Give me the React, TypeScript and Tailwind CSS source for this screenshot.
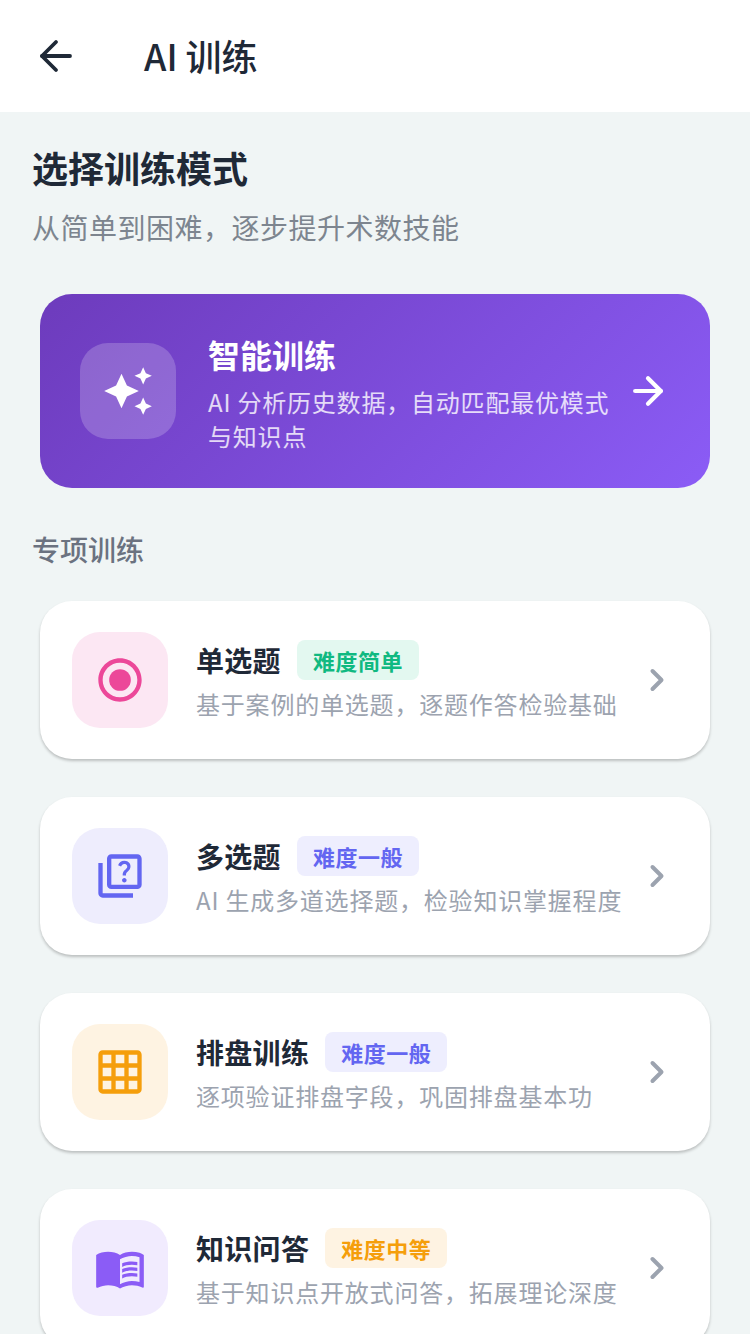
import { ArrowLeft, ArrowRight, ChevronRight } from "lucide-react";
import type { ReactNode } from "react";

const FONT = { fontFamily: '"Noto Sans CJK SC", "Noto Sans", sans-serif' };

const RadioIcon = () => (
  <svg viewBox="0 0 24 24" className="w-[52px] h-[52px]" fill="#ec4899">
    <path d="M12 2C6.48 2 2 6.48 2 12s4.48 10 10 10 10-4.48 10-10S17.52 2 12 2zm0 18c-4.42 0-8-3.58-8-8s3.58-8 8-8 8 3.58 8 8-3.58 8-8 8z" />
    <circle cx="12" cy="12" r="5" />
  </svg>
);

const QuizIcon = () => (
  <svg viewBox="0 0 24 24" className="w-[52px] h-[52px]" fill="#6366f1">
    <path d="M4 6H2v14c0 1.1.9 2 2 2h14v-2H4V6zm16-4H8c-1.1 0-2 .9-2 2v12c0 1.1.9 2 2 2h12c1.1 0 2-.9 2-2V4c0-1.1-.9-2-2-2zm0 14H8V4h12v12zm-6.49-5.84c.41-.73 1.18-1.16 1.63-1.8.48-.68.21-1.94-1.14-1.94-.88 0-1.32.67-1.5 1.23l-1.37-.57C11.51 5.96 12.52 5 13.99 5c1.23 0 2.08.56 2.51 1.26.37.6.58 1.73.01 2.57-.63.93-1.23 1.21-1.56 1.81-.13.24-.18.4-.18 1.18h-1.52c.01-.41-.06-1.08.26-1.66zm-.56 3.79c0-.59.47-1.04 1.05-1.04.59 0 1.04.45 1.04 1.04 0 .58-.44 1.05-1.04 1.05-.58 0-1.05-.47-1.05-1.05z" />
  </svg>
);

const GridIcon = () => (
  <svg viewBox="0 0 24 24" className="w-[52px] h-[52px]" fill="#f59e0b">
    <path d="M20 2H4c-1.1 0-2 .9-2 2v16c0 1.1.9 2 2 2h16c1.1 0 2-.9 2-2V4c0-1.1-.9-2-2-2zM8 20H4v-4h4v4zm0-6H4v-4h4v4zm0-6H4V4h4v4zm6 12h-4v-4h4v4zm0-6h-4v-4h4v4zm0-6h-4V4h4v4zm6 12h-4v-4h4v4zm0-6h-4v-4h4v4zm0-6h-4V4h4v4z" />
  </svg>
);

const BookIcon = () => (
  <svg viewBox="0 0 24 24" className="w-[52px] h-[52px]" fill="#8b5cf6">
    <path d="M21 5c-1.11-.35-2.33-.5-3.5-.5-1.95 0-4.05.4-5.5 1.5-1.45-1.1-3.55-1.5-5.5-1.5S2.45 4.9 1 6v14.65c0 .25.25.5.5.5.1 0 .15-.05.25-.05C3.1 20.45 5.05 20 6.5 20c1.95 0 4.05.4 5.5 1.5 1.35-.85 3.8-1.5 5.5-1.5 1.65 0 3.35.3 4.75 1.05.1.05.15.05.25.05.25 0 .5-.25.5-.5V6c-.6-.45-1.25-.75-2-1zm0 13.5c-1.1-.35-2.3-.5-3.5-.5-1.7 0-4.15.65-5.5 1.5V8c1.35-.85 3.8-1.5 5.5-1.5 1.2 0 2.4.15 3.5.5v11.5z" />
    <path d="M17.5 10.5c.88 0 1.73.09 2.5.26V9.24c-.79-.15-1.64-.24-2.5-.24-1.7 0-3.24.29-4.5.83v1.66c1.13-.64 2.7-.99 4.5-.99zM13 12.49v1.66c1.13-.64 2.7-.99 4.5-.99.88 0 1.73.09 2.5.26V11.9c-.79-.15-1.64-.24-2.5-.24-1.7 0-3.24.3-4.5.83zM17.5 14.33c-1.7 0-3.24.29-4.5.83v1.66c1.13-.64 2.7-.99 4.5-.99.88 0 1.73.09 2.5.26v-1.52c-.79-.16-1.64-.24-2.5-.24z" />
  </svg>
);

const SparkleIcon = () => (
  <svg viewBox="0 0 24 24" className="w-[52px] h-[52px]" fill="#ffffff">
    <path d="M19 9l1.25-2.75L23 5l-2.75-1.25L19 1l-1.25 2.75L15 5l2.75 1.25L19 9zm-7.5.5L9 4 6.5 9.5 1 12l5.5 2.5L9 20l2.5-5.5L17 12l-5.5-2.5zM19 15l-1.25 2.75L15 19l2.75 1.25L19 23l1.25-2.75L23 19l-2.75-1.25L19 15z" />
  </svg>
);

interface Mode {
  title: string;
  desc: string;
  level: string;
  levelClass: string;
  iconBg: string;
  icon: ReactNode;
}

const modes: Mode[] = [
  { title: "单选题", desc: "基于案例的单选题，逐题作答检验基础", level: "难度简单", levelClass: "bg-[#e3f8f0] text-[#10b981]", iconBg: "bg-[#fce7f3]", icon: <RadioIcon /> },
  { title: "多选题", desc: "AI 生成多道选择题，检验知识掌握程度", level: "难度一般", levelClass: "bg-[#eeeefe] text-[#6366f1]", iconBg: "bg-[#eeedfd]", icon: <QuizIcon /> },
  { title: "排盘训练", desc: "逐项验证排盘字段，巩固排盘基本功", level: "难度一般", levelClass: "bg-[#eeeefe] text-[#6366f1]", iconBg: "bg-[#fef3e2]", icon: <GridIcon /> },
  { title: "知识问答", desc: "基于知识点开放式问答，拓展理论深度", level: "难度中等", levelClass: "bg-[#fef3e2] text-[#f59e0b]", iconBg: "bg-[#f1ebfe]", icon: <BookIcon /> },
];

export default function App() {
  return (
    <div className="h-[1334px] overflow-hidden bg-[#f0f5f5]" style={FONT}>
      {/* Header */}
      <header className="h-[112px] bg-white flex items-center pl-[32px]">
        <ArrowLeft className="w-[48px] h-[48px] text-[#1f2937]" strokeWidth={1.9} />
        <h1 className="ml-[64px] mb-[3px] text-[36px] leading-[44px] font-medium text-[#1f2937]">AI 训练</h1>
      </header>

      <div className="pt-[30px]">
        <div className="px-[32px]">
          <h2 className="text-[36px] leading-[50px] font-bold text-[#1f2937]">选择训练模式</h2>
          <p className="mt-[15px] text-[28px] leading-[40px] tracking-[0.5px] text-[#7d858f]">从简单到困难，逐步提升术数技能</p>
        </div>

        {/* Smart training */}
        <div className="mx-[40px] mt-[47px] h-[194px] rounded-[32px] bg-[linear-gradient(135deg,#6d3bbc,#8b5cf6)] flex items-center pl-[40px] pr-[40px]">
          <div className="w-[96px] h-[96px] shrink-0 rounded-[28px] bg-white/20 flex items-center justify-center">
            <SparkleIcon />
          </div>
          <div className="ml-[32px] mt-[3px] flex-1">
            <div className="text-[32px] leading-[44px] font-bold text-white">智能训练</div>
            <p className="mt-[9px] w-[410px] text-[24px] leading-[34px] tracking-[0.8px] text-white/80">AI 分析历史数据，自动匹配最优模式与知识点</p>
          </div>
          <ArrowRight className="w-[44px] h-[44px] text-white" strokeWidth={2.3} />
        </div>

        <h3 className="mt-[41px] px-[32px] text-[28px] leading-[40px] font-medium text-[#6b7280]">专项训练</h3>

        {/* Mode list */}
        <div className="mt-[32px] mx-[40px] flex flex-col gap-[38px]">
          {modes.map((m) => (
            <div key={m.title} className="h-[158px] shrink-0 rounded-[32px] bg-white shadow-[0_2px_3px_rgba(0,0,0,0.22)] flex items-center pl-[32px] pr-[35px]">
              <div className={`w-[96px] h-[96px] shrink-0 rounded-[28px] flex items-center justify-center ${m.iconBg}`}>
                {m.icon}
              </div>
              <div className="ml-[28px] pt-[2px] flex-1 min-w-0">
                <div className="flex items-center gap-[16px]">
                  <span className="text-[28px] leading-[40px] tracking-[0.3px] font-bold text-[#1f2937]">{m.title}</span>
                  <span className={`h-[40px] px-[16px] rounded-[8px] text-[22px] leading-[40px] tracking-[0.5px] font-bold ${m.levelClass}`}>{m.level}</span>
                </div>
                <p className="mt-[6px] text-[24px] leading-[36px] tracking-[0.8px] whitespace-nowrap text-[#9ca3af]">{m.desc}</p>
              </div>
              <ChevronRight className="w-[36px] h-[36px] text-[#9ca3af] shrink-0" strokeWidth={2.67} />
            </div>
          ))}
        </div>
      </div>
    </div>
  );
}
